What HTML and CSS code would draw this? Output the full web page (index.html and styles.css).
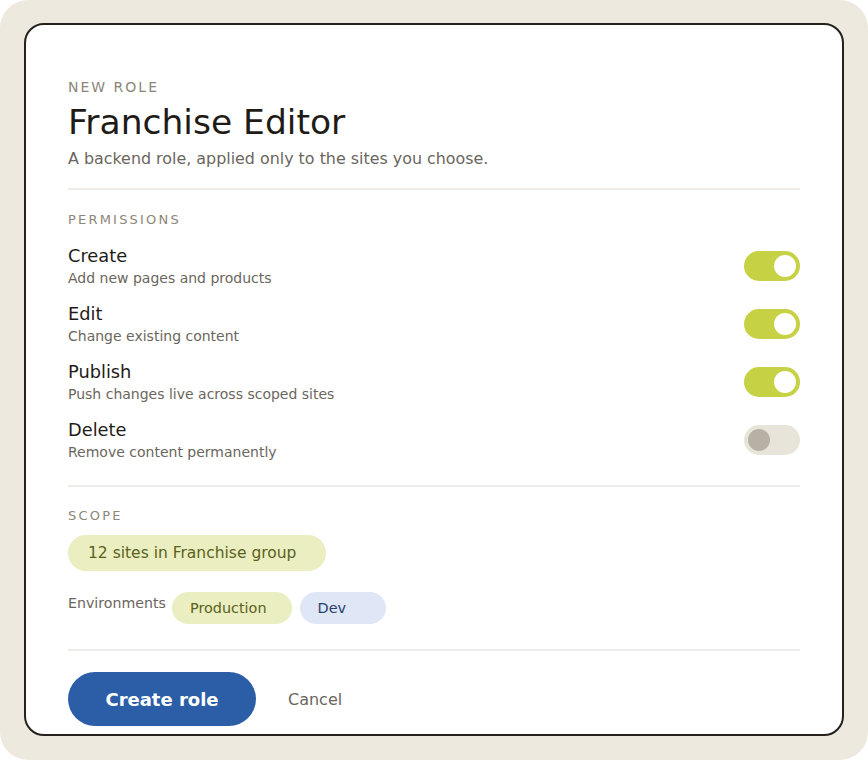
FILE: index.html
```html
<!DOCTYPE html>
<html lang="en">
<head>
<meta charset="utf-8">
<title>New role</title>
<link rel="stylesheet" href="styles.css">
</head>
<body>
<div class="frame">
  <div class="card">
    <header class="head">
      <div class="eyebrow">NEW ROLE</div>
      <h1 class="title">Franchise Editor</h1>
      <p class="sub">A backend role, applied only to the sites you choose.</p>
    </header>
    <hr class="rule">
    <section class="perms">
      <div class="section-label">PERMISSIONS</div>
      <div class="perm-list">
        <div class="perm">
          <div class="perm-text"><div class="perm-name">Create</div><div class="perm-desc">Add new pages and products</div></div>
          <span class="toggle on"><span class="knob"></span></span>
        </div>
        <div class="perm">
          <div class="perm-text"><div class="perm-name">Edit</div><div class="perm-desc">Change existing content</div></div>
          <span class="toggle on"><span class="knob"></span></span>
        </div>
        <div class="perm">
          <div class="perm-text"><div class="perm-name">Publish</div><div class="perm-desc">Push changes live across scoped sites</div></div>
          <span class="toggle on"><span class="knob"></span></span>
        </div>
        <div class="perm">
          <div class="perm-text"><div class="perm-name">Delete</div><div class="perm-desc">Remove content permanently</div></div>
          <span class="toggle off"><span class="knob"></span></span>
        </div>
      </div>
    </section>
    <hr class="rule rule-scope">
    <section class="scope">
      <div class="section-label">SCOPE</div>
      <div class="scope-pill">12 sites in Franchise group</div>
      <div class="envs">
        <span class="env-label">Environments</span>
        <span class="chip chip-prod">Production</span>
        <span class="chip chip-dev">Dev</span>
      </div>
    </section>
    <hr class="rule rule-actions">
    <div class="actions">
      <button class="btn-primary">Create role</button>
      <button class="btn-link">Cancel</button>
    </div>
  </div>
</div>
</body>
</html>
```
FILE: styles.css
```css
* { box-sizing: border-box; }
html, body { margin: 0; padding: 0; background: #ffffff; }
body { font-family: "DejaVu Sans", "Liberation Sans", sans-serif; }

.frame {
  width: 868px;
  height: 760px;
  background: #ede9df;
  border-radius: 28px;
  padding: 23px 24px 24px 24px;
}

.card {
  height: 713px;
  background: #ffffff;
  border: 2px solid #25221e;
  border-radius: 20px;
  padding: 54px 42px 0 42px;
  overflow: hidden;
}

.eyebrow {
  font-size: 14px;
  line-height: 16px;
  letter-spacing: 2px;
  color: #8b8679;
}

.title {
  margin: 7px 0 0 0;
  font-size: 34.5px;
  line-height: 41px;
  font-weight: normal;
  color: #1f1c18;
}

.sub {
  margin: 5px 0 0 0;
  font-size: 15.9px;
  line-height: 22px;
  color: #6b665d;
}

.rule {
  border: 0;
  height: 2px;
  background: #efece7;
  margin: 18px 0 0 0;
}

.section-label {
  margin-top: 22px;
  font-size: 13px;
  line-height: 16px;
  letter-spacing: 2.2px;
  color: #8b8679;
}

.perm-list {
  margin-top: 17px;
  display: flex;
  flex-direction: column;
  gap: 14px;
}

.perm {
  display: flex;
  justify-content: space-between;
  align-items: flex-start;
}

.perm-name {
  font-size: 17.8px;
  line-height: 22px;
  color: #1f1c18;
}

.perm-desc {
  margin-top: 1px;
  font-size: 14px;
  line-height: 21px;
  color: #6b665d;
}

.toggle {
  width: 56px;
  height: 30px;
  border-radius: 15px;
  display: flex;
  align-items: center;
  padding: 0 4px;
  flex-shrink: 0;
  margin-top: 6px;
}

.toggle .knob {
  width: 22px;
  height: 22px;
  border-radius: 50%;
}

.toggle.on { background: #c6d143; justify-content: flex-end; }
.toggle.on .knob { background: #ffffff; }
.toggle.off { background: #e8e4d9; justify-content: flex-start; }
.toggle.off .knob { background: #b6b1a4; }

.rule-scope { margin-top: 22px; }

.scope .section-label { margin-top: 21px; }

.scope-pill {
  display: inline-block;
  margin-top: 11px;
  height: 36px;
  line-height: 36px;
  padding: 0 30px 0 20px;
  border-radius: 18px;
  background: #eaeec0;
  color: #5b611d;
  font-size: 15.5px;
}

.envs {
  margin-top: 21px;
  display: flex;
  align-items: flex-start;
  gap: 8px;
}

.env-label {
  font-size: 14.2px;
  line-height: 22px;
  color: #6b665d;
  margin-right: -2px;
}

.chip {
  height: 32px;
  line-height: 32px;
  border-radius: 16px;
  font-size: 14.4px;
  padding: 0 25px 0 18px;
}

.chip-prod { background: #eaeec0; color: #5b611d; }
.chip-dev { background: #dfe6f5; color: #263f6d; min-width: 86px; }

.rule-actions { margin-top: 25px; }

.actions {
  margin-top: 21px;
  display: flex;
  align-items: center;
  gap: 32px;
}

.btn-primary {
  font-family: inherit;
  height: 54px;
  width: 188px;
  border: 0;
  border-radius: 27px;
  background: #2c5ea8;
  color: #ffffff;
  font-size: 18px;
  font-weight: bold;
}

.btn-link {
  font-family: inherit;
  border: 0;
  background: transparent;
  padding: 0;
  color: #6b665d;
  font-size: 16px;
}
```
